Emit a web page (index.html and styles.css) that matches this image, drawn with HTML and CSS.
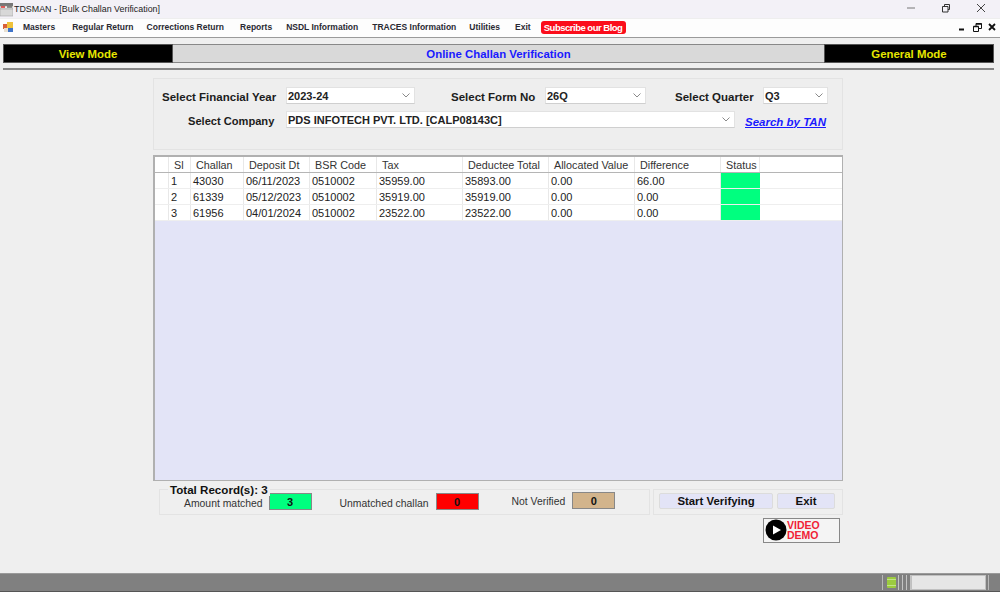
FILE: index.html
```html
<!DOCTYPE html>
<html lang="en">
<head>
<meta charset="utf-8">
<title>TDSMAN - [Bulk Challan Verification]</title>
<link rel="stylesheet" href="styles.css">
</head>
<body>
<div class="app">
  <header class="titlebar">
    <svg class="app-icon" width="13" height="15" viewBox="0 0 13 15"><rect x="0" y="1" width="13" height="3" fill="#777"/><rect x="0" y="4" width="13" height="3" fill="#eee" stroke="#888" stroke-width=".5"/><path d="M1 5h4" stroke="#d22" stroke-width="1.4"/><path d="M7 5h5" stroke="#333" stroke-width="1"/><rect x="0" y="7" width="13" height="7" fill="#d8d8d8" stroke="#999" stroke-width=".5"/></svg>
    <span class="title-text">TDSMAN - [Bulk Challan Verification]</span>
    <div class="win-controls">
      <svg width="10" height="10" viewBox="0 0 10 10"><path d="M1 5h8" stroke="#777" stroke-width="1"/></svg>
      <svg width="10" height="10" viewBox="0 0 10 10"><path d="M1.5 3.500h5.500v5.500h-5.500zM3.500 3.500v-2h5v5h-1.500" fill="none" stroke="#333" stroke-width="1"/></svg>
      <svg width="10" height="10" viewBox="0 0 10 10"><path d="M1 1l8 8M9 1l-8 8" stroke="#444" stroke-width="1"/></svg>
    </div>
  </header>
  <nav class="menubar">
    <svg class="menu-icon" width="11" height="11" viewBox="0 0 11 11"><rect x="0" y="2" width="5" height="5" fill="#d9603a"/><rect x="4" y="0" width="6" height="6" fill="#efc23a"/><rect x="1" y="6" width="4" height="4" fill="#e8e0d0"/><rect x="5" y="6" width="5" height="4" fill="#3f74c9"/></svg>
    <span class="menu-item m1">Masters</span>
    <span class="menu-item m2">Regular Return</span>
    <span class="menu-item m3">Corrections Return</span>
    <span class="menu-item m4">Reports</span>
    <span class="menu-item m5">NSDL Information</span>
    <span class="menu-item m6">TRACES Information</span>
    <span class="menu-item m7">Utilities</span>
    <span class="menu-item m8">Exit</span>
    <span class="blog">Subscribe our Blog</span>
    <div class="mdi-controls">
      <svg width="8" height="8" viewBox="0 0 8 8"><path d="M1 6.500h5" stroke="#111" stroke-width="2"/></svg>
      <svg width="9" height="9" viewBox="0 0 9 9"><path d="M.5 3.500h5v5h-5zM3 3v-2.500h5.500v5h-3" fill="none" stroke="#111" stroke-width="1"/><path d="M.5 3.500h5M3 1h5.500" stroke="#111" stroke-width="1.500"/></svg>
      <svg width="8" height="8" viewBox="0 0 8 8"><path d="M1 1l6 6M7 1l-6 6" stroke="#111" stroke-width="1.800"/></svg>
    </div>
  </nav>

  <section class="modebar">
    <div class="mode">View Mode</div>
    <div class="mode-title">Online Challan Verification</div>
    <div class="mode">General Mode</div>
  </section>
  <div class="rule"></div>

  <main class="content">
    <section class="filters">
      <div class="filter-row">
        <label class="lbl lbl-year">Select Financial Year</label>
        <div class="combo combo-year"><span>2023-24</span><svg class="chev" width="8" height="5" viewBox="0 0 8 5"><path d="M.5.500l3.500 3.500 3.500-3.500" fill="none" stroke="#8a8a8a"/></svg></div>
        <label class="lbl lbl-form">Select Form No</label>
        <div class="combo combo-form"><span>26Q</span><svg class="chev" width="8" height="5" viewBox="0 0 8 5"><path d="M.5.500l3.500 3.500 3.500-3.500" fill="none" stroke="#8a8a8a"/></svg></div>
        <label class="lbl lbl-quarter">Select Quarter</label>
        <div class="combo combo-quarter"><span>Q3</span><svg class="chev" width="8" height="5" viewBox="0 0 8 5"><path d="M.5.500l3.500 3.500 3.500-3.500" fill="none" stroke="#8a8a8a"/></svg></div>
      </div>
      <div class="filter-row row-two">
        <label class="lbl lbl-company">Select Company</label>
        <div class="combo combo-company"><span>PDS INFOTECH PVT. LTD. [CALP08143C]</span><svg class="chev" width="8" height="5" viewBox="0 0 8 5"><path d="M.5.500l3.500 3.500 3.500-3.500" fill="none" stroke="#8a8a8a"/></svg></div>
        <a class="tan-link" href="#">Search by TAN</a>
      </div>
    </section>

    <section class="grid">
      <div class="g-row g-head">
        <div class="c"></div><div class="c">Sl</div><div class="c">Challan</div><div class="c">Deposit Dt</div><div class="c">BSR Code</div><div class="c">Tax</div><div class="c">Deductee Total</div><div class="c">Allocated Value</div><div class="c">Difference</div><div class="c">Status</div><div class="c last"></div>
      </div>
      <div class="g-row">
        <div class="c"></div><div class="c">1</div><div class="c">43030</div><div class="c">06/11/2023</div><div class="c">0510002</div><div class="c">35959.00</div><div class="c">35893.00</div><div class="c">0.00</div><div class="c">66.00</div><div class="c ok"></div><div class="c last"></div>
      </div>
      <div class="g-row">
        <div class="c"></div><div class="c">2</div><div class="c">61339</div><div class="c">05/12/2023</div><div class="c">0510002</div><div class="c">35919.00</div><div class="c">35919.00</div><div class="c">0.00</div><div class="c">0.00</div><div class="c ok"></div><div class="c last"></div>
      </div>
      <div class="g-row">
        <div class="c"></div><div class="c">3</div><div class="c">61956</div><div class="c">04/01/2024</div><div class="c">0510002</div><div class="c">23522.00</div><div class="c">23522.00</div><div class="c">0.00</div><div class="c">0.00</div><div class="c ok"></div><div class="c last"></div>
      </div>
    </section>

    <section class="footer-row">
      <div class="summary">
        <span class="legend">Total Record(s): 3</span>
        <span class="s-label s1">Amount matched</span><span class="count green">3</span>
        <span class="s-label s2">Unmatched challan</span><span class="count red">0</span>
        <span class="s-label s3">Not Verified</span><span class="count tan">0</span>
      </div>
      <div class="actions">
        <button class="btn btn-start" type="button">Start Verifying</button>
        <button class="btn btn-exit" type="button">Exit</button>
      </div>
    </section>
    <div class="demo-row">
      <div class="demo">
        <svg width="22" height="22" viewBox="0 0 22 22"><circle cx="11" cy="11" r="10.500" fill="#000"/><path d="M8 6.500l8 4.500-8 4.500z" fill="#fff"/></svg>
        <span class="demo-text">VIDEO<br>DEMO</span>
      </div>
    </div>
  </main>

  <footer class="statusbar">
    <i class="sep"></i>
    <svg width="9" height="11" viewBox="0 0 9 11"><rect width="9" height="11" rx="1" fill="#9ccb3f"/><path d="M0 2.500h9M0 8.500h9" stroke="#c3e38a"/></svg>
    <div class="ticks"><i></i><i></i><i></i><i></i></div>
    <div class="progress"></div>
    <i class="sep end"></i>
  </footer>
</div>
</body>
</html>
```
FILE: styles.css
```css
* { box-sizing: border-box; }
html, body { margin: 0; height: 100%; }
body { font-family: "Liberation Sans", Arial, sans-serif; color: #111; background: #efefef; overflow: hidden; }
.app { width: 1000px; height: 592px; display: flex; flex-direction: column; }

.titlebar { height: 18px; flex: none; display: flex; align-items: center; background: #f3f1f7; }
.app-icon { margin-right: 1px; }
.title-text { font: 8.900px "Liberation Sans", sans-serif; color: #222; }
.win-controls { margin-left: auto; display: flex; gap: 25px; padding-right: 14px; margin-top: -2px; }

.menubar { height: 20px; flex: none; display: flex; align-items: center; background: #fdfdfd; border-bottom: 1px solid #9a9a9a; border-top: 1px solid #eee; padding-bottom: 2px; }
.menu-icon { margin-left: 3px; }
.menu-item { font-size: 8.500px; font-weight: bold; color: #2a2a33; white-space: nowrap; }
.m1 { margin-left: 9px; }
.m2 { margin-left: 17px; }
.m3 { margin-left: 13px; }
.m4 { margin-left: 16px; }
.m5 { margin-left: 14px; }
.m6 { margin-left: 14px; }
.m7 { margin-left: 13px; }
.m8 { margin-left: 15px; }
.blog { margin-left: 10px; background: #fb0d1b; color: #fff; font-size: 9.500px; font-weight: bold; letter-spacing: -.5px; border-radius: 3px; padding: 1px 3px; height: 13px; line-height: 11px; white-space: nowrap; width: 85px; text-align: center; }
.mdi-controls { margin-left: auto; display: flex; gap: 6.500px; align-items: center; padding-right: 4px; }

.modebar { margin: 6px 6px 0 3px; height: 19px; flex: none; display: grid; grid-template-columns: 170px 1fr 170px; }
.mode { background: #000; color: #e6e600; font-size: 11.400px; font-weight: bold; display: flex; align-items: center; justify-content: center; border: 1px solid #555; }
.mode-title { background: #d9d9d9; color: #1a1aff; font-size: 11.400px; font-weight: bold; display: flex; align-items: center; justify-content: center; border-top: 1px solid #888; border-bottom: 1px solid #888; }
.rule { margin: 5px 6px 0 3px; height: 2px; flex: none; background: #868686; }

.content { flex: 1; width: 690px; margin: 8px 0 0 153px; display: flex; flex-direction: column; }

.filters { height: 72px; flex: none; background: #eeeeee; border: 1px solid #e3e3e3; padding-top: 8px; }
.filter-row { display: flex; align-items: center; height: 17px; }
.row-two { margin-top: 7px; }
.lbl { font-size: 11.500px; font-weight: bold; color: #1c1c1c; white-space: nowrap; padding-top: 2px; }
.lbl-year { margin-left: 8px; width: 124px; }
.lbl-form { margin-left: 36px; width: 94px; }
.lbl-quarter { margin-left: 29px; width: 88px; }
.lbl-company { margin-left: 34px; width: 98px; font-size: 11.100px; }
.combo { height: 17px; background: #fff; border: 1px solid #e2e2e2; border-bottom-color: #cfcfcf; display: flex; align-items: center; justify-content: space-between; padding: 0 4px 0 1px; font-size: 11px; font-weight: bold; color: #222; }
.combo span { white-space: nowrap; }
.combo-year { width: 129px; }
.combo-form { width: 101px; }
.combo-quarter { width: 65px; }
.combo-company { width: 449px; }
.tan-link { margin-left: 10px; padding-top: 4px; font-size: 11.500px; font-weight: bold; font-style: italic; color: #1a1aff; white-space: nowrap; }

.grid { height: 326px; flex: none; margin-top: 5px; background: #e3e4f7; border: 2px solid #b0b0b0; border-right-width: 1px; border-bottom-width: 1px; }
.g-row { display: grid; grid-template-columns: 14px 22px 53px 66px 67px 86px 86px 86px 86px 39px 1fr; height: 16px; background: #fff; font-size: 11px; color: #222; border-bottom: 1px solid #eeeeee; }
.g-head { height: 16px; font-size: 10.800px; color: #333; border-bottom: 1px solid #b5b5b5; }
.c { line-height: 16px; padding-left: 2px; border-right: 1px solid #e8e8e8; white-space: nowrap; overflow: hidden; }
.g-head .c { padding-left: 5px; line-height: 17px; }
.c.last { border-right: 0; }
.ok { background: #00ff7f; border-right-color: #00ff7f; }

.footer-row { display: flex; height: 26px; flex: none; margin: 8px 0 0 6px; }
.summary { position: relative; width: 491px; border: 1px solid #e3e3e3; display: flex; align-items: flex-start; }
.legend { position: absolute; left: 8px; top: -6px; background: #efefef; padding: 0 2px; font-size: 11.600px; font-weight: bold; color: #111; line-height: 12px; }
.s-label { font-size: 10.400px; color: #333; white-space: nowrap; margin-top: 8px; }
.s1 { margin-left: 24px; }
.s2 { margin-left: 28px; }
.s3 { margin-left: 33px; margin-top: 6px; }
.count { width: 43px; height: 17px; border: 1px solid #888; margin-top: 3px; display: flex; align-items: center; justify-content: center; font-size: 11px; font-weight: bold; }
.s1 + .count { margin-left: 6px; }
.s2 + .count { margin-left: 7px; }
.s3 + .count { margin-left: 7px; margin-top: 2px; }
.green { background: #00ff7f; }
.red { background: #ff0000; }
.tan { background: #d2b48c; }

.actions { width: 190px; margin-left: 3px; border: 1px solid #e3e3e3; display: flex; align-items: flex-start; padding: 3px 0 0 5px; gap: 4px; }
.btn { height: 16px; background: #e3e4f7; border: 1px solid #dcdcdc; border-radius: 2px; padding: 0; font: bold 11.400px "Liberation Sans", sans-serif; color: #111; }
.btn-start { width: 114px; }
.btn-exit { width: 58px; }

.demo-row { display: flex; justify-content: flex-end; margin-top: 3px; padding-right: 3px; }
.demo { width: 77px; height: 25px; border: 1px solid #888; background: #f4f4f4; display: flex; align-items: center; gap: 0; padding: 0 0 2px 1px; }
.demo-text { font-size: 10.500px; font-weight: bold; color: #f02236; line-height: 10px; }

.statusbar { height: 19px; flex: none; background: #808080; border-top: 1px solid #9a9a9a; border-bottom: 1px solid #555; display: flex; align-items: center; justify-content: flex-end; padding-right: 11px; }
.statusbar svg { margin-left: 4px; margin-right: 1px; }
.sep { width: 1px; height: 15px; background: #b8b8b8; }
.sep.end { margin-left: 2px; }
.ticks { display: flex; gap: 3px; margin-left: 1px; }
.ticks i { width: 1px; height: 15px; background: #c4c4c4; display: block; }
.progress { width: 75px; height: 15px; background: #e6e6e6; border: 1px solid #c0c0c0; }
```
